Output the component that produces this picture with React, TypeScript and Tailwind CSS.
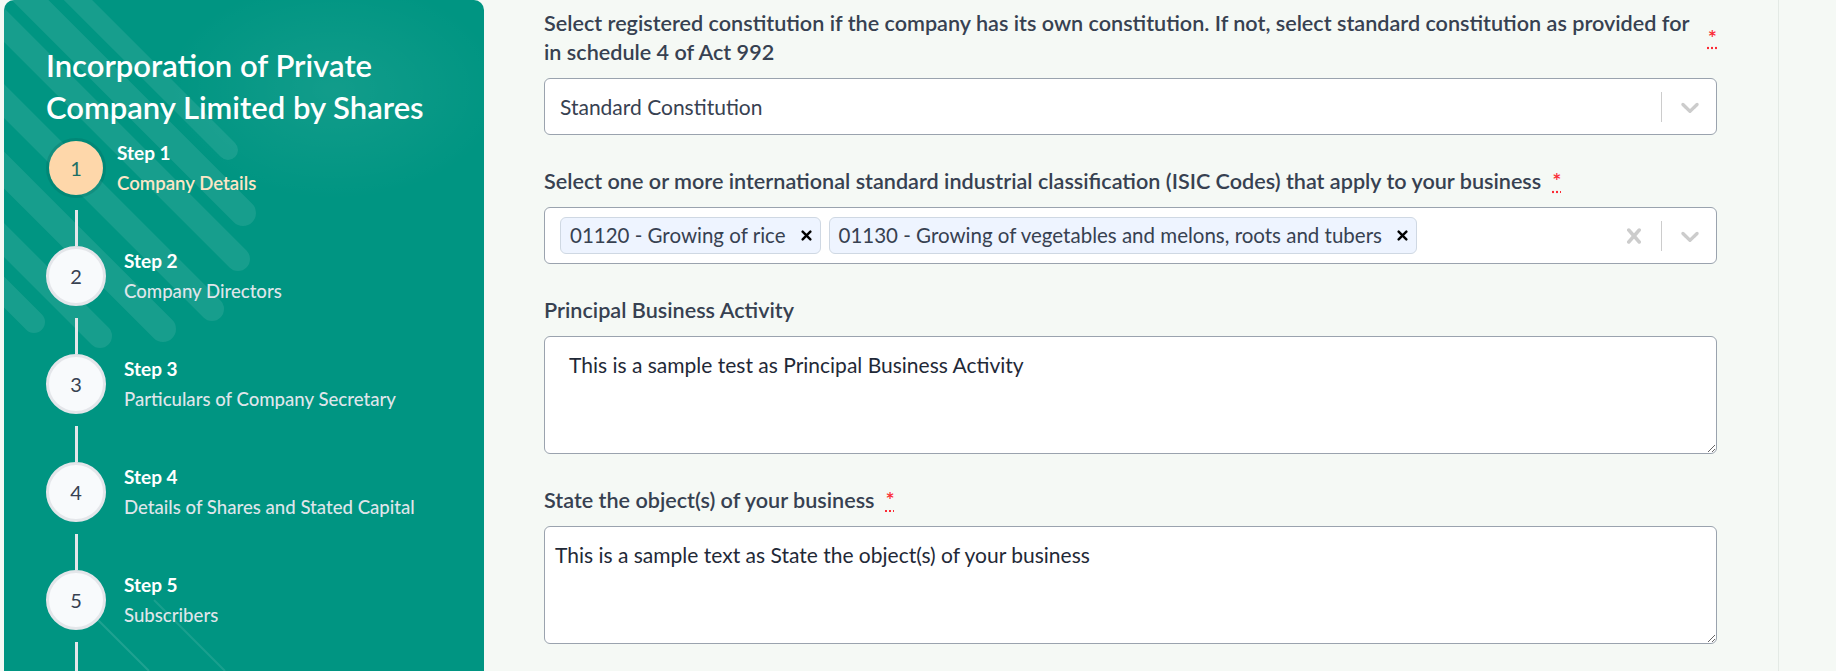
import React from "react";

const steps = [
  { n: 1, title: "Step 1", desc: "Company Details", active: true },
  { n: 2, title: "Step 2", desc: "Company Directors" },
  { n: 3, title: "Step 3", desc: "Particulars of Company Secretary" },
  { n: 4, title: "Step 4", desc: "Details of Shares and Stated Capital" },
  { n: 5, title: "Step 5", desc: "Subscribers" },
];

function Chevron() {
  return (
    <svg viewBox="0 0 20 20" className="h-[30px] w-[30px] fill-[#cccccc]">
      <path d="M4.516 7.548c0.436-0.446 1.043-0.481 1.576 0l3.908 3.747 3.908-3.747c0.533-0.481 1.141-0.446 1.574 0 0.436 0.445 0.408 1.197 0 1.615-0.406 0.418-4.695 4.502-4.695 4.502-0.217 0.223-0.502 0.335-0.787 0.335s-0.57-0.112-0.789-0.335c0 0-4.287-4.084-4.695-4.502s-0.436-1.17 0-1.615z" />
    </svg>
  );
}

function Cross() {
  return (
    <svg viewBox="0 0 20 20" className="h-[30px] w-[30px] fill-[#cccccc]">
      <path d="M14.348 14.849c-0.469 0.469-1.229 0.469-1.697 0l-2.651-3.030-2.651 3.029c-0.469 0.469-1.229 0.469-1.697 0-0.469-0.469-0.469-1.229 0-1.697l2.758-3.15-2.759-3.152c-0.469-0.469-0.469-1.228 0-1.697s1.228-0.469 1.697 0l2.652 3.031 2.651-3.031c0.469-0.469 1.228-0.469 1.697 0s0.469 1.229 0 1.697l-2.758 3.152 2.758 3.15c0.469 0.469 0.469 1.229 0 1.698z" />
    </svg>
  );
}

function Chip({ label }: { label: string }) {
  return (
    <div className="flex h-[37px] items-center rounded-[6px] border border-[#cfd8e3] bg-[#eef4ff] pl-[9px] pr-[8px] text-[20.5px] text-[#374151]">
      <span>{label}</span>
      <svg viewBox="0 0 10 10" className="ml-[15px] h-[11px] w-[11px] stroke-black" strokeWidth={2.2} strokeLinecap="round">
        <path d="M1.5 1.5l7 7M8.5 1.5l-7 7" />
      </svg>
    </div>
  );
}

function Required() {
  return (
    <abbr title="required" className="shrink-0 text-red-500">
      *
    </abbr>
  );
}

function Label({ text, required }: { text: string; required?: boolean }) {
  return (
    <label className="mb-[11px] flex items-center gap-x-[11px] text-[21.6px] font-semibold leading-[29px] text-[#374151]">
      <span>{text}</span>
      {required && <Required />}
    </label>
  );
}

function Stripes() {
  const bars = [
    { x: 224, y: 150, w: 20 },
    { x: 239, y: 213, w: 26 },
    { x: 234, y: 259, w: 24 },
    { x: 208, y: 309, w: 24 },
    { x: 159, y: 329, w: 26 },
    { x: 96, y: 336, w: 24 },
    { x: 30, y: 322, w: 22 },
  ];
  return (
    <svg className="pointer-events-none absolute inset-0 h-full w-full" viewBox="0 0 480 671" preserveAspectRatio="none">
      <defs>
        <radialGradient id="glow" cx="0.5" cy="0.5" r="0.5">
          <stop offset="0" stopColor="#ffffff" stopOpacity="0.07" />
          <stop offset="1" stopColor="#ffffff" stopOpacity="0" />
        </radialGradient>
      </defs>
      <ellipse cx="330" cy="90" rx="170" ry="110" fill="url(#glow)" />
      {bars.map((b, i) => (
        <line
          key={i}
          x1={b.x - 300}
          y1={b.y - 300}
          x2={b.x}
          y2={b.y}
          stroke="#ffffff"
          strokeOpacity={0.09}
          strokeWidth={b.w}
          strokeLinecap="round"
        />
      ))}
      <line x1="60" y1="586" x2="145" y2="671" stroke="#ffffff" strokeOpacity={0.12} strokeWidth={2} />
      <line x1="150" y1="600" x2="221" y2="671" stroke="#ffffff" strokeOpacity={0.1} strokeWidth={2} />
    </svg>
  );
}

function StepItem({ step }: { step: (typeof steps)[number] }) {
  return (
    <div className="flex h-[60px] items-center">
      <div className="flex w-[60px] justify-center">
        {step.active ? (
          <div className="flex h-[54px] w-[54px] items-center justify-center rounded-full bg-[#fed7aa] text-[20px] text-[#1b6f66] shadow-[0_0_0_3px_rgba(0,80,70,0.18)]">
            {step.n}
          </div>
        ) : (
          <div className="flex h-[60px] w-[60px] items-center justify-center rounded-full border-[3px] border-[#e4e6ea] bg-[#f8fafc] text-[20px] text-[#374151]">
            {step.n}
          </div>
        )}
      </div>
      <div className={step.active ? "ml-[11px]" : "ml-[18px]"}>
        <div className="font-bold leading-[30px] text-white">{step.title}</div>
        <div
          className={
            step.active
              ? "text-[18.6px] font-semibold leading-[30px] text-[#fde6c6]"
              : "text-[18.6px] font-medium leading-[30px] text-[#dfe5ea]"
          }
        >
          {step.desc}
        </div>
      </div>
    </div>
  );
}

export default function App() {
  return (
    <div className="flex h-[671px] overflow-hidden bg-[#f5f9f5] font-[Lato,'Noto_Sans',sans-serif] text-[19px]">
      {/* Sidebar */}
      <aside className="relative ml-[4px] h-[671px] w-[480px] shrink-0 overflow-hidden rounded-t-[10px] bg-[#009582]">
        <Stripes />
        <div className="relative pl-[42px] pt-[44px]">
          <h1 className="text-[31px] font-semibold leading-[42px] text-white">
            Incorporation of Private
            <br />
            Company Limited by Shares
          </h1>
          <div className="mt-[10px]">
            {steps.map((s) => (
              <div key={s.n}>
                <StepItem step={s} />
                <div className="pl-[29px] pt-[12px]">
                  <div className="h-[36px] w-[3px] bg-[#e4e6ea]" />
                </div>
              </div>
            ))}
          </div>
        </div>
      </aside>

      {/* Form */}
      <main className="w-[1295px] shrink-0 border-r border-[#e4eae5] pl-[60px] pr-[61px] pt-[9px] text-[21px]">
        <div>
          <Label
            text="Select registered constitution if the company has its own constitution. If not, select standard constitution as provided for in schedule 4 of Act 992"
            required
          />
          <div className="flex h-[57px] items-center rounded-[6px] border border-[#9aa3ae] bg-white">
            <div className="flex-1 pl-[15px] text-[#374151]">Standard Constitution</div>
            <span className="h-[30px] w-px bg-[#cccccc]" />
            <span className="ml-[13px] mr-[11px] flex">
              <Chevron />
            </span>
          </div>
        </div>

        <div className="mt-[32px]">
          <Label
            text="Select one or more international standard industrial classification (ISIC Codes) that apply to your business"
            required
          />
          <div className="flex h-[57px] items-center rounded-[6px] border border-[#9aa3ae] bg-white">
            <div className="flex flex-1 items-center gap-[8px] pl-[15px]">
              <Chip label="01120 - Growing of rice" />
              <Chip label="01130 - Growing of vegetables and melons, roots and tubers" />
            </div>
            <span className="mr-[12px] flex">
              <Cross />
            </span>
            <span className="h-[30px] w-px bg-[#cccccc]" />
            <span className="ml-[13px] mr-[11px] flex">
              <Chevron />
            </span>
          </div>
        </div>

        <div className="mt-[32px]">
          <Label text="Principal Business Activity" />
          <textarea
            className="block h-[118px] w-full rounded-[6px] border border-[#9aa3ae] bg-white pl-[24px] pr-[11px] pt-[14px] leading-[28px] text-[#1f2937] outline-none"
            defaultValue="This is a sample test as Principal Business Activity"
          />
        </div>

        <div className="mt-[32px]">
          <Label text="State the object(s) of your business" required />
          <textarea
            className="block h-[118px] w-full rounded-[6px] border border-[#9aa3ae] bg-white pl-[10px] pr-[11px] pt-[14px] leading-[28px] text-[#1f2937] outline-none"
            defaultValue="This is a sample text as State the object(s) of your business"
          />
        </div>
      </main>
    </div>
  );
}
